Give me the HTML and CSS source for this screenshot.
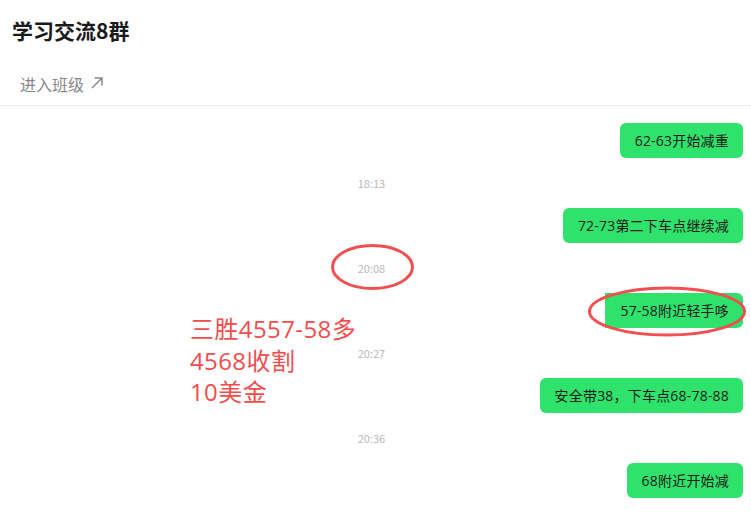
FILE: index.html
```html
<!DOCTYPE html>
<html lang="zh">
<head>
<meta charset="utf-8">
<link rel="stylesheet" href="styles.css">
</head>
<body>
<div class="page">
  <header class="header">
    <h1 class="title">学习交流8群</h1>
  </header>
  <div class="link-row">
    <span class="link-text">进入班级</span>
    <svg class="link-arrow" width="14" height="14" viewBox="0 0 14 14"><path d="M2 12 L12 2 M4.5 2 H12 V9.5" fill="none" stroke="#8a8a8a" stroke-width="1.5"/></svg>
  </div>
  <main class="chat">
    <div class="msg"><div class="bubble">62-63开始减重</div></div>
    <div class="time">18:13</div>
    <div class="msg"><div class="bubble">72-73第二下车点继续减</div></div>
    <div class="time">20:08</div>
    <div class="msg"><div class="bubble bubble-cut">57-58附近轻手哆</div></div>
    <div class="time">20:27</div>
    <div class="msg"><div class="bubble">安全带38，下车点68-78-88</div></div>
    <div class="time">20:36</div>
    <div class="msg"><div class="bubble">68附近开始减</div></div>
  </main>
  <svg class="marks" width="751" height="514" viewBox="0 0 751 514">
    <ellipse cx="372.5" cy="267" rx="40" ry="21.5" fill="none" stroke="#f25050" stroke-width="3"/>
    <ellipse cx="667" cy="311.5" rx="77.5" ry="23.5" fill="none" stroke="#f25050" stroke-width="3"/>
  </svg>
  <div class="note"><div>三胜4557-58多</div><div>4568收割</div><div>10美金</div></div>
</div>
</body>
</html>
```
FILE: styles.css
```css
* { box-sizing: border-box; }
html, body { margin: 0; padding: 0; background: #fff; }
body {
  font-family: "Noto Sans CJK SC", "Noto Sans", sans-serif;
  width: 751px;
  height: 514px;
  overflow: hidden;
}
.page { position: relative; width: 751px; height: 514px; }
.header {
  height: 60px;
  display: flex;
  align-items: center;
  padding-left: 12px;
}
.title {
  margin: 0;
  font-size: 21px;
  font-weight: 700;
  color: #1a1a1a;
  line-height: 1;
}
.link-row {
  height: 46px;
  display: flex;
  align-items: center;
  gap: 6px;
  padding-left: 20px;
  padding-top: 2px;
  border-bottom: 1px solid #ebebeb;
}
.link-text { font-size: 16px; color: #888; line-height: 1; }
.link-arrow { margin-top: -2px; }
.chat {
  width: 743px;
  padding-top: 17px;
  display: flex;
  flex-direction: column;
}
.msg { display: flex; justify-content: flex-end; }
.bubble {
  height: 35px;
  line-height: 35px;
  padding: 0 14px 0 15px;
  border-radius: 6px;
  background: #2fe26b;
  color: #1b1b1b;
  font-family: "Open Sans", "Noto Sans CJK SC", sans-serif;
  font-size: 14px;
  letter-spacing: 0.2px;
  white-space: nowrap;
}
.bubble-cut { border-radius: 0 6px 6px 0; }
.time {
  height: 50px;
  line-height: 50px;
  text-align: center;
  font-size: 11px;
  color: #b8b8b8;
}
.marks { position: absolute; left: 0; top: 0; pointer-events: none; }
.note {
  position: absolute;
  left: 190px;
  top: 313px;
  font-family: "Open Sans", "Noto Sans CJK SC", sans-serif;
  font-size: 24px;
  line-height: 31.5px;
  letter-spacing: 0.4px;
  color: #f24c4c;
}
.note div { height: 31.5px; overflow: hidden; }
```
